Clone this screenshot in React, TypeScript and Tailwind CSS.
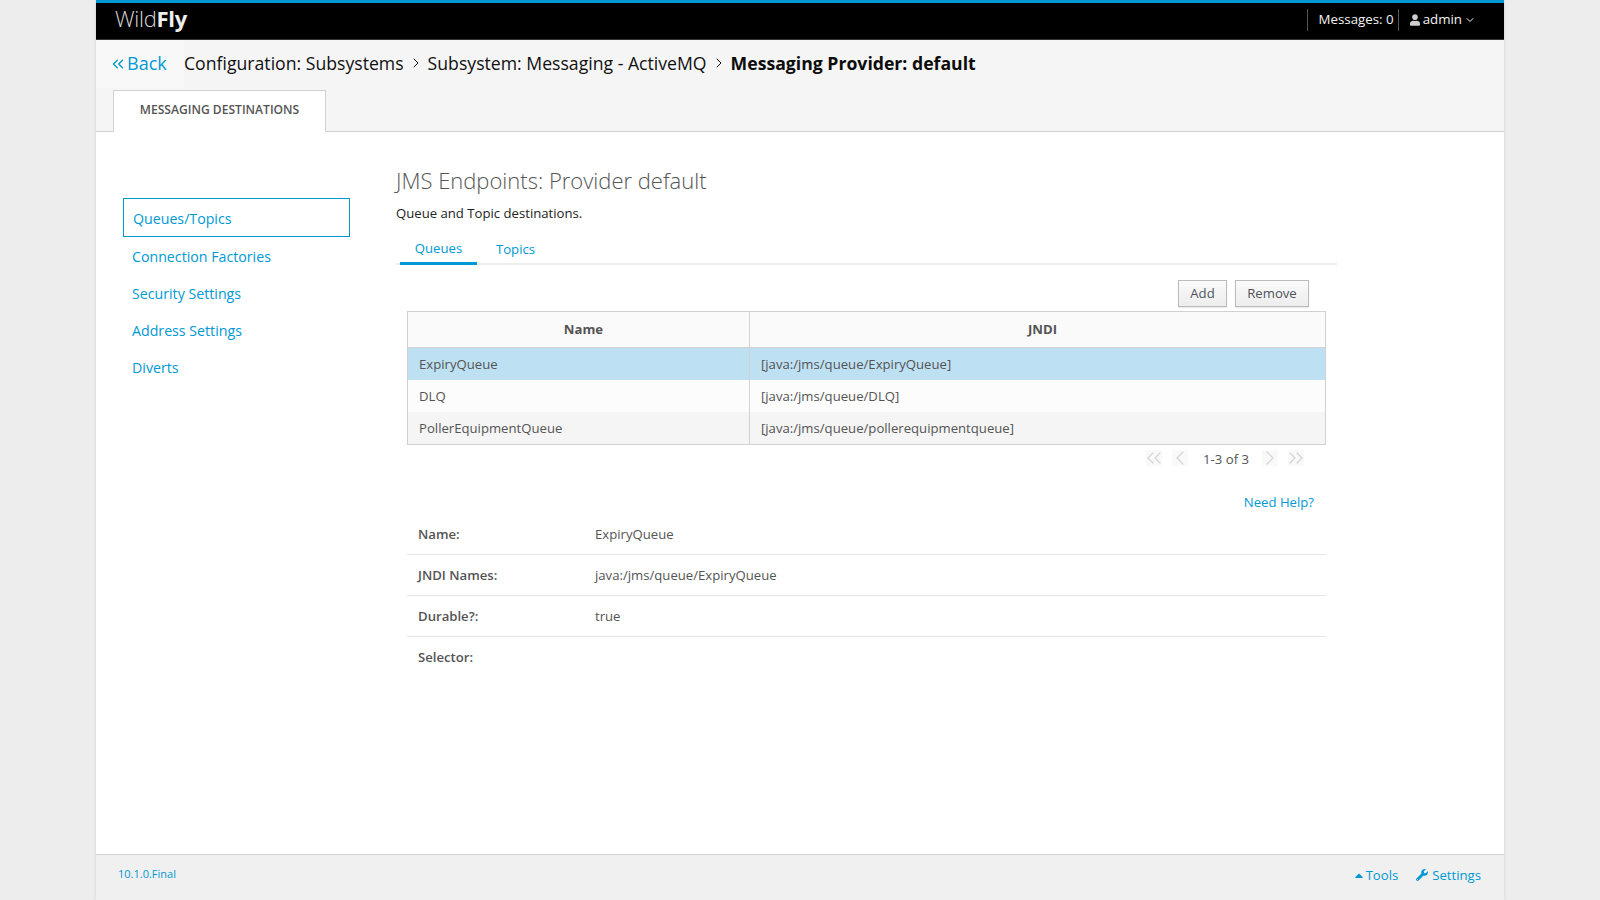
import { ChevronDown, ChevronLeft, ChevronRight, ChevronsLeft, ChevronsRight } from "lucide-react";
import { FaUser, FaWrench, FaCaretUp } from "react-icons/fa";

const rows = [
  ["ExpiryQueue", "[java:/jms/queue/ExpiryQueue]", "bg-[#bee0f3]"],
  ["DLQ", "[java:/jms/queue/DLQ]", "bg-[#fcfcfc]"],
  ["PollerEquipmentQueue", "[java:/jms/queue/pollerequipmentqueue]", "bg-[#f5f5f5]"],
];

const details = [
  ["Name:", "ExpiryQueue"],
  ["JNDI Names:", "java:/jms/queue/ExpiryQueue"],
  ["Durable?:", "true"],
  ["Selector:", ""],
];

const nav = ["Connection Factories", "Security Settings", "Address Settings", "Diverts"];

function PagerIcon({ children }: { children: React.ReactNode }) {
  return <span className="flex h-[16px] w-[16px] items-center justify-center bg-[#f9f9f9] text-[#d4d4d4]">{children}</span>;
}

const pagerIcon = "h-[24px] w-[24px] shrink-0";

export default function App() {
  return (
    <div className="flex h-[900px] justify-center overflow-hidden bg-[#ededed] font-['Open_Sans',sans-serif] text-[13.15px] text-[#545454]">
      <div className="flex w-[1408px] flex-col bg-white shadow-[0_0_3px_rgba(0,0,0,0.12)]">
        <header className="flex h-[40px] shrink-0 items-center justify-between border-t-[3px] border-b border-[#333] border-t-[#0099d3] bg-black pl-[19px] pr-[28px]">
          <div className="mt-[-7px] text-[22px] leading-none tracking-[-0.3px] text-[#d8d8d8]">
            <span className="font-light">Wild</span><span className="font-bold text-[#eeeeee]">Fly</span>
          </div>
          <div className="mt-[-2px] flex h-[22px] items-center text-[13.3px] text-[#f2f2f2]">
            <span className="mr-[11px] h-[22px] w-px bg-[#555]" />
            <span>Messages: 0</span>
            <span className="ml-[4px] mr-[11px] h-[22px] w-px bg-[#555]" />
            <FaUser className="mr-[3px] h-[12px] w-[10px] text-[#cfcfcf]" />
            <span>admin</span>
            <ChevronDown className="ml-[2px] h-[12px] w-[12px]" strokeWidth={2} />
          </div>
        </header>

        <div className="h-[92px] shrink-0 border-b border-[#d1d1d1] bg-[#f5f5f5]">
          <div className="flex h-[48px] items-center">
            <div className="flex h-[48px] w-[88px] items-center bg-[#f8f8f8] pb-[1px] pl-[13px] text-[18px] text-[#0099d3]">
              <ChevronsLeft className="h-[18px] w-[18px] shrink-0" strokeWidth={1.8} />
              <span>Back</span>
            </div>
            <div className="flex items-center pb-[1px] text-[17.65px] text-[#111]">
              <span>Configuration: Subsystems</span>
              <ChevronRight className="mx-[4px] h-[16px] w-[16px]" strokeWidth={1.5} />
              <span>Subsystem: Messaging - ActiveMQ</span>
              <ChevronRight className="mx-[4px] h-[16px] w-[16px]" strokeWidth={1.5} />
              <span className="font-bold text-[#0c0c0c]">Messaging Provider: default</span>
            </div>
          </div>
          <div className="mt-[2px] pl-[17px]">
            <div className="flex h-[42px] w-[213px] items-center justify-center border border-b-0 border-[#d1d1d1] bg-white pb-[2px] text-[12.1px] font-semibold uppercase text-[#545454]">
              Messaging Destinations
            </div>
          </div>
        </div>

        <main className="flex min-h-0 flex-1">
          <nav className="w-[300px] shrink-0 pl-[27px] pt-[66px] text-[14.2px] text-[#0099d3]">
            <div className="flex h-[39px] w-[227px] items-center border border-[#0099d3] pl-[9px] pt-[2px]">Queues/Topics</div>
            <ul>
              {nav.map((n) => (
                <li key={n} className="flex h-[37px] items-center pl-[9px] first:mt-[1px]">{n}</li>
              ))}
            </ul>
          </nav>

          <section className="w-[941px] pt-[29px]">
            <h1 className="text-[22px] font-light leading-[38px] text-[#555]">JMS Endpoints: Provider default</h1>
            <p className="mt-[4px] leading-[20px] text-[#222]">Queue and Topic destinations.</p>
            <div className="mt-[10px] flex h-[32px] items-end border-b-2 border-[#ededed] pl-[4px] text-[#0099d3]">
              <div className="mb-[-2px] flex h-[32px] w-[77px] items-center justify-center border-b-[3px] border-[#0099d3] pt-[3px]">Queues</div>
              <div className="flex h-[30px] w-[77px] items-center justify-center pt-[4px]">Topics</div>
            </div>

            <div className="ml-[11px] w-[919px]">
              <div className="mr-[17px] mt-[15px] flex justify-end gap-[8px]">
                <button className="h-[27px] w-[49px] border border-[#bbb] bg-gradient-to-b from-[#fafafa] to-[#ededed] text-[#4d5258] shadow-[0_1px_1px_rgba(0,0,0,0.08)]">Add</button>
                <button className="h-[27px] w-[74px] border border-[#bbb] bg-gradient-to-b from-[#fafafa] to-[#ededed] text-[#4d5258] shadow-[0_1px_1px_rgba(0,0,0,0.08)]">Remove</button>
              </div>

              <div className="mt-[4px] border border-[#d1d1d1]">
                <div className="flex h-[36px] border-b border-[#d1d1d1] bg-[#fafafa] font-bold">
                  <div className="flex w-[342px] items-center justify-center border-r border-[#d1d1d1] pl-[10px]">Name</div>
                  <div className="flex flex-1 items-center justify-center pl-[10px]">JNDI</div>
                </div>
                {rows.map(([a, b, c]) => (
                  <div key={a} className={`flex h-[32px] ${c}`}>
                    <div className="flex w-[342px] items-center border-r border-[#d1d1d1] pl-[11px] pt-[2px]">{a}</div>
                    <div className="flex flex-1 items-center pl-[11px] pt-[2px]">{b}</div>
                  </div>
                ))}
              </div>

              <div className="mr-[22px] mt-[4px] flex h-[18px] items-center justify-end">
                <PagerIcon><ChevronsLeft className={pagerIcon} strokeWidth={1.2} /></PagerIcon>
                <span className="ml-[10px]"><PagerIcon><ChevronLeft className={pagerIcon} strokeWidth={1.2} /></PagerIcon></span>
                <span className="ml-[15px] mr-[13px] mt-[3px] text-[#545454]">1-3 of 3</span>
                <PagerIcon><ChevronRight className={pagerIcon} strokeWidth={1.2} /></PagerIcon>
                <span className="ml-[10px]"><PagerIcon><ChevronsRight className={pagerIcon} strokeWidth={1.2} /></PagerIcon></span>
              </div>

              <div className="mr-[12px] mt-[26px] text-right leading-[18px] text-[#0099d3]">Need Help?</div>

              <div className="mt-[3px]">
                {details.map(([k, v], i) => (
                  <div key={k} className={`flex h-[41px] items-center pl-[11px] ${i < 3 ? "border-b border-[#e6e6e6] pt-[2px]" : ""}`}>
                    <span className="w-[177px] font-semibold">{k}</span>
                    <span>{v}</span>
                  </div>
                ))}
              </div>
            </div>
          </section>
        </main>

        <footer className="flex h-[46px] shrink-0 justify-between border-t border-[#d1d1d1] bg-[#f0f0f0] pl-[22px] pr-[23px] text-[#0099d3]">
          <span className="pt-[11px] text-[11px] leading-[16px]">10.1.0.Final</span>
          <div className="flex gap-[18px] pt-[11px] leading-[18px]">
            <span className="flex items-center self-start"><FaCaretUp className="mr-[2px] h-[13px] w-[10px]" />Tools</span>
            <span className="flex items-center self-start"><FaWrench className="mr-[4px] h-[12px] w-[12px]" />Settings</span>
          </div>
        </footer>
      </div>
    </div>
  );
}
